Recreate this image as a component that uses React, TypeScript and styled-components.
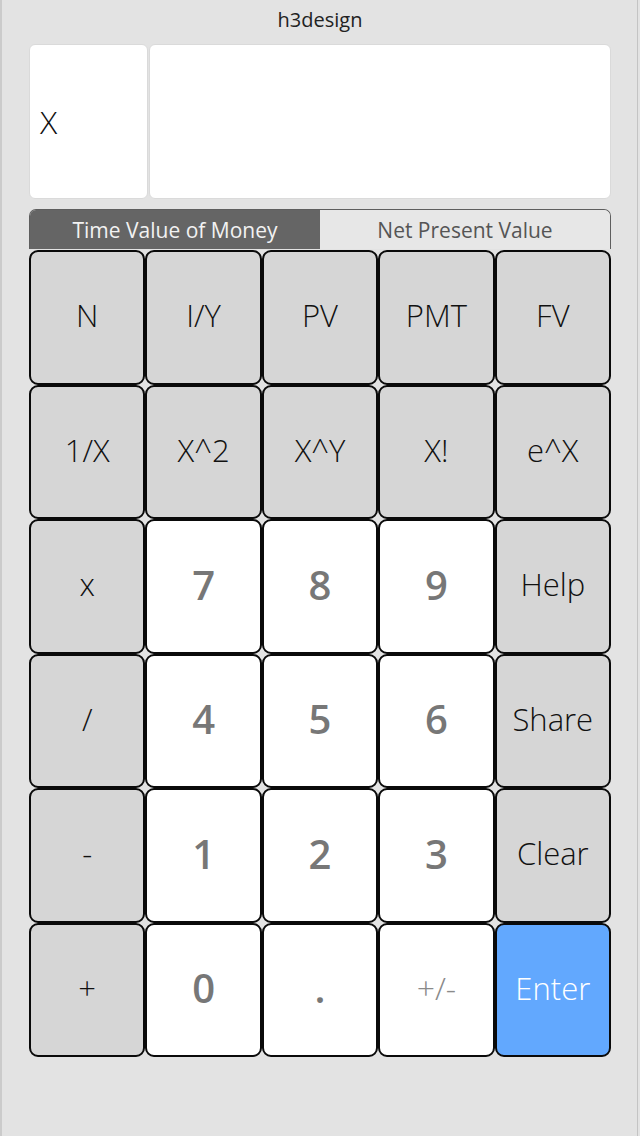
import React, { useState } from 'react'
import styled, { createGlobalStyle } from 'styled-components'

type KeyKind = 'fn' | 'digit' | 'sign' | 'enter'

interface KeyDef {
  label: string
  kind: KeyKind
}

const keys: KeyDef[] = [
  { label: 'N', kind: 'fn' },
  { label: 'I/Y', kind: 'fn' },
  { label: 'PV', kind: 'fn' },
  { label: 'PMT', kind: 'fn' },
  { label: 'FV', kind: 'fn' },
  { label: '1/X', kind: 'fn' },
  { label: 'X^2', kind: 'fn' },
  { label: 'X^Y', kind: 'fn' },
  { label: 'X!', kind: 'fn' },
  { label: 'e^X', kind: 'fn' },
  { label: 'x', kind: 'fn' },
  { label: '7', kind: 'digit' },
  { label: '8', kind: 'digit' },
  { label: '9', kind: 'digit' },
  { label: 'Help', kind: 'fn' },
  { label: '/', kind: 'fn' },
  { label: '4', kind: 'digit' },
  { label: '5', kind: 'digit' },
  { label: '6', kind: 'digit' },
  { label: 'Share', kind: 'fn' },
  { label: '-', kind: 'fn' },
  { label: '1', kind: 'digit' },
  { label: '2', kind: 'digit' },
  { label: '3', kind: 'digit' },
  { label: 'Clear', kind: 'fn' },
  { label: '+', kind: 'fn' },
  { label: '0', kind: 'digit' },
  { label: '.', kind: 'digit' },
  { label: '+/-', kind: 'sign' },
  { label: 'Enter', kind: 'enter' },
]

const GlobalStyle = createGlobalStyle`
  html, body {
    margin: 0;
    padding: 0;
    background: #e3e3e3;
  }
  body {
    font-family: "Open Sans", "Noto Sans", sans-serif;
  }
`

function App() {
  const [tab, setTab] = useState(0)

  return (
    <Screen>
      <GlobalStyle />
      <Title>h3design</Title>
      <Display>
        <RegisterName>X</RegisterName>
        <RegisterValue />
      </Display>
      <Tabs>
        <Tab $active={tab === 0} onClick={() => setTab(0)}>
          Time Value of Money
        </Tab>
        <Tab $active={tab === 1} onClick={() => setTab(1)}>
          Net Present Value
        </Tab>
      </Tabs>
      <Keypad>
        {keys.map((k, i) => (
          <Key key={i} $kind={k.kind}>
            {k.label}
          </Key>
        ))}
      </Keypad>
    </Screen>
  )
}

const Screen = styled.div`
  width: 640px;
  height: 1136px;
  box-sizing: border-box;
  padding: 0 29px;
  display: flex;
  flex-direction: column;
  background: #e3e3e3;
  box-shadow: inset 2px 0 0 #cbcbcb, inset -2px 0 0 #e3e3e3,
    inset -3px 0 0 #c4c4c4;
`

const Title = styled.div`
  height: 38px;
  display: flex;
  align-items: center;
  justify-content: center;
  font-size: 20px;
  color: #222;
  font-weight: 400;
`

const Display = styled.div`
  height: 155px;
  margin-top: 6px;
  display: grid;
  grid-template-columns: 119px 1fr;
  gap: 1px;
`

const RegisterName = styled.div`
  background: #fff;
  border-radius: 6px;
  border: 1px solid #dadada;
  display: flex;
  align-items: center;
  padding-left: 10px;
  font-size: 32px;
  font-weight: 300;
  color: #111;
`

const RegisterValue = styled.div`
  background: #fff;
  border-radius: 6px;
  border: 1px solid #dadada;
`

const Tabs = styled.div`
  margin-top: 10px;
  height: 40px;
  box-sizing: border-box;
  display: grid;
  grid-template-columns: 1fr 1fr;
  border: 1.5px solid #5e5e5e;
  border-bottom: none;
  border-radius: 7px 7px 0 0;
  overflow: hidden;
`

const Tab = styled.div<{ $active: boolean }>`
  display: flex;
  align-items: center;
  justify-content: center;
  font-size: 21px;
  font-weight: 400;
  background: ${(p) => (p.$active ? '#656565' : '#e7e7e7')};
  color: ${(p) => (p.$active ? '#f2f2f2' : '#555')};
  cursor: pointer;
`

const Keypad = styled.div`
  display: grid;
  grid-template-columns: repeat(5, 1fr);
  grid-auto-rows: 134.5px;
  margin-top: 1px;
`

const Key = styled.button<{ $kind: KeyKind }>`
  box-sizing: border-box;
  margin: 0;
  border: 2px solid #0a0a0a;
  border-radius: 9px;
  display: flex;
  align-items: center;
  justify-content: center;
  padding: 0 0 4px;
  font-family: "Open Sans", "Noto Sans", sans-serif;
  cursor: pointer;
  background: ${(p) =>
    p.$kind === 'enter' ? '#62a8fe' : p.$kind === 'fn' ? '#d6d6d6' : '#fff'};
  color: ${(p) =>
    p.$kind === 'enter'
      ? '#fff'
      : p.$kind === 'fn'
      ? '#111'
      : p.$kind === 'sign'
      ? '#8a8a8a'
      : '#777'};
  font-size: ${(p) =>
    p.$kind === 'digit' ? '40px' : p.$kind === 'sign' ? '32px' : '31px'};
  font-weight: ${(p) => (p.$kind === 'digit' ? 600 : 300)};
`

export default App
